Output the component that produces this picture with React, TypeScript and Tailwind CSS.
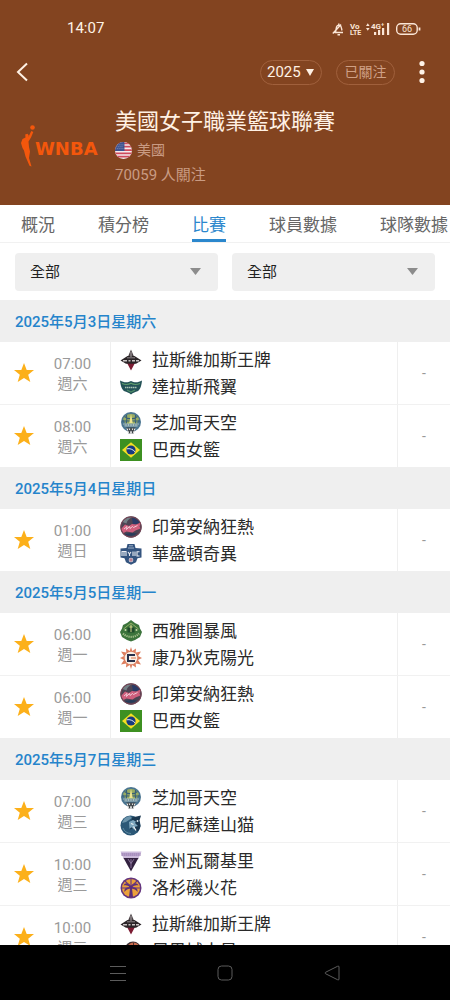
import type { ReactNode } from 'react';

function Aces() {
  return (
    <svg viewBox="0 0 22 22" className="size-[22px]" aria-hidden="true">
      <path d="M11 0.500l3.600 8.500L11 12 7.400 9z" fill="#4a4246" />
      <path d="M11 21.500L6.500 13h9z" fill="#7c1c33" />
      <path d="M0.500 11.500L7.500 7h7l7 4.500-5.500 3.200H6z" fill="#2b2528" />
      <path d="M3 11.700h4M8.500 11.700h2M12 11.700h3M16 11.700h3" stroke="#c9c4c4" strokeWidth="1.600" />
      <path d="M7 8.800h8" stroke="#989194" strokeWidth="0.900" />
      <path d="M11 3v5" stroke="#b5afb1" strokeWidth="0.900" />
    </svg>
  );
}

function Wings() {
  return (
    <svg viewBox="0 0 22 22" className="size-[22px]" aria-hidden="true">
      <path d="M0 4.500c3 1.800 6 2 8.500 1.500L11 5l2.500 1c2.500.5 5.500.3 8.500-1.500-.5 5.500-2 9.500-4.500 10.800-2 .8-4.500 1.200-6.500 3.200-2-2-4.500-2.400-6.500-3.200C2 14 .500 10 0 4.500z" fill="#245257" />
      <path d="M2 7.500c3.500 1.500 6 1.500 9-.2 3 1.700 5.500 1.700 9 .2" fill="none" stroke="#5f9c6d" strokeWidth="1.200" />
      <path d="M5 11.500h12" stroke="#a9c4b4" strokeWidth="1.600" strokeDasharray="1.500 0.500" />
      <path d="M7 14l4 2 4-2" fill="none" stroke="#4e8d68" strokeWidth="1.200" />
    </svg>
  );
}

function Sky() {
  return (
    <svg viewBox="0 0 22 22" className="size-[22px]" aria-hidden="true">
      <circle cx="11" cy="10" r="10" fill="#4a7590" />
      <path d="M3 7a9 9 0 0 1 16 0l-2.500 5h-11z" fill="#98ab62" />
      <path d="M2 9h18M4.500 4.500c4 3 9 3 13 0M6 13c1-4 1-7 .5-10M16 13c-1-4-1-7-.500-10" fill="none" stroke="#375f78" strokeWidth="1.100" />
      <path d="M11 1.500l1.700 9.500H9.300z" fill="#eee48c" />
      <path d="M3 11.500h16l-1.500 3h-13z" fill="#a8bfc0" />
      <path d="M4 13h14" stroke="#4c7086" strokeWidth="1" strokeDasharray="1.500 1" />
      <path d="M6.500 16h9L14 21.500H8z" fill="#e9ebea" />
      <path d="M6.500 16h9M7.500 18.700h7M8 16l2 5.500M11 16l-2 5.500M11 16l2 5.500M14 16l-2 5.500" stroke="#31393d" strokeWidth="0.900" />
    </svg>
  );
}

function Brazil() {
  return (
    <svg viewBox="0 0 22 22" className="size-[22px]" aria-hidden="true">
      <path d="M0 0h22v22H0z" fill="#3d9021" />
      <path d="M11 3.200L20 11l-9 7.800L2 11z" fill="#f4df23" />
      <circle cx="11" cy="11" r="4.600" fill="#173a80" />
      <path d="M6.800 9.800c3-.6 6 .4 8.200 3" fill="none" stroke="#dfe8ef" strokeWidth="1" />
    </svg>
  );
}

function Fever() {
  return (
    <svg viewBox="0 0 22 22" className="size-[22px]" aria-hidden="true">
      <circle cx="11" cy="11" r="10.700" fill="#4d4453" />
      <path d="M2.500 6A10 10 0 0 1 12 1.200c-3 1.500-5 3.500-5.500 6.300z" fill="#727f85" />
      <path d="M12 2c3 0 6.500 2 8 5l-7 2z" fill="#293a66" />
      <path d="M1 13l4-4.500 4 1.500 3-2 4 .5 5-2-1.500 4 1 2-5 2-3 2-6-1-3 1.500z" fill="#cf5f7d" />
      <path d="M4 13l3-2.500-.500 3 3-3 .500 2 2.500-2 1 1 4-2" fill="none" stroke="#f3d5de" strokeWidth="0.900" />
      <path d="M4 18c4 2.500 9 2.500 13-.500l-6-.500z" fill="#273b5a" />
      <circle cx="11" cy="11" r="10.200" fill="none" stroke="#7e4353" strokeWidth="0.900" />
    </svg>
  );
}

function Mystics() {
  return (
    <svg viewBox="0 0 22 22" className="size-[22px]" aria-hidden="true">
      <path d="M7.500 1h7l1 4 6 .5v9l-4 .7-1.500 4-5 2.500-5-2.500-1.500-4-4-.7v-9l6-.5z" fill="#34547f" />
      <path d="M9 2.800h4M8 5h6" stroke="#9db0c7" strokeWidth="1" />
      <path d="M2 13V8.500h4V13M4 8.500V13M8 9l1.500 2L11 9M9.500 11v2M13 8.500V13M15 8.500V13M19.500 8.800H17V13h2.500" fill="none" stroke="#eceef4" strokeWidth="1.100" />
      <circle cx="11" cy="17" r="2.300" fill="#d6dbe4" />
      <path d="M11 15v4M9 17h4" stroke="#a94359" strokeWidth="0.700" />
    </svg>
  );
}

function Storm() {
  return (
    <svg viewBox="0 0 22 22" className="size-[22px]" aria-hidden="true">
      <path d="M11 0l4 3 4 2 1 3.500L22 12l-2 5-5 3-4 1.500L7 20l-5-3-2-5 2-3.500L3 5l4-2z" fill="#3c743c" />
      <path d="M3.500 9L11 3l7.500 6" fill="none" stroke="#8fae62" strokeWidth="1" />
      <path d="M7.500 7.500h7v5h-7z" fill="#1f4a2b" />
      <path d="M11 4.500V12M9.500 7h3" stroke="#d5d48a" strokeWidth="1" />
      <path d="M3 13.500c4 4.500 12 4.500 16 0" fill="none" stroke="#9fbd87" strokeWidth="2" strokeDasharray="1.300 0.800" />
      <circle cx="5.500" cy="10" r="1" fill="#cfdcae" />
      <circle cx="16.500" cy="10" r="1" fill="#cfdcae" />
    </svg>
  );
}

function Sun() {
  return (
    <svg viewBox="0 0 22 22" className="size-[22px]" aria-hidden="true">
      <path d="M11 0l1.300 4L16 1.500l-.3 4L21 4.500 18 9l4 2-4 2 3 4.500-5.300-1 .3 4-3.700-2.500L11 22l-1.300-4L6 20.500l.3-4-5.300 1L4 13l-4-2 4-2-3-4.500 5.300 1L6 1.500 9.700 4z" fill="#dd7f60" />
      <circle cx="11" cy="11" r="6.300" fill="#f8eee4" />
      <path d="M15 8H8v6h7" fill="none" stroke="#28304a" strokeWidth="2" />
      <path d="M11 11h5" stroke="#d9774f" strokeWidth="1" />
    </svg>
  );
}

function Lynx() {
  return (
    <svg viewBox="0 0 22 22" className="size-[22px]" aria-hidden="true">
      <circle cx="10.500" cy="11.500" r="10" fill="#2b5877" />
      <path d="M2 9a10 10 0 0 1 8-7l2 2-6 4z" fill="#6c94ab" />
      <path d="M12 3.500l9-2-1.500 5 1 6-2.500 5-5-3-3 1 1-6z" fill="#1b3850" />
      <path d="M9 8l4-2 3 1.500-1 1.500 3 3-3 .8-.8 3-2.700-2.500-2 1.500z" fill="#7ca5bc" />
      <path d="M13.500 12.500l2.500 4M11 9.500l2.500 1" stroke="#eef3f5" strokeWidth="1.300" fill="none" />
      <path d="M3 14c1 3 4 5.500 8 5.500" fill="none" stroke="#5f8ba3" />
      <circle cx="17.500" cy="7" r="0.900" fill="#dbe7ed" />
    </svg>
  );
}

function Valkyries() {
  return (
    <svg viewBox="0 0 22 22" className="size-[22px]" aria-hidden="true">
      <path d="M0.500 1.500h21l-3 7h-15z" fill="#cbbadb" />
      <path d="M1.500 4.500h19" stroke="#9b80b3" strokeWidth="3" strokeDasharray="1.200 0.800" />
      <path d="M3.500 8h15L11 21.500z" fill="#32213f" />
      <path d="M11 9v9M8 9l3 4.500L14 9" fill="none" stroke="#9d86af" strokeWidth="0.800" />
    </svg>
  );
}

function Sparks() {
  return (
    <svg viewBox="0 0 22 22" className="size-[22px]" aria-hidden="true">
      <circle cx="11" cy="11" r="10.500" fill="#64357e" />
      <circle cx="11" cy="11" r="9" fill="#eba13a" />
      <path d="M11 8.500c-3.500-3-6-3-7.500 0 3-.8 4.500 0 6 1.500-4 .5-5.500 2-5 5 1.500-2.500 3.500-3 5.500-3.500L9 20h4l-1-8.500c2 .5 4 1 5.500 3.500.5-3-1-4.500-5-5 1.500-1.500 3-2.300 6-1.500-1.500-3-4-3-7.500 0z" fill="#5c2e79" />
      <path d="M11 1v7M5 4l5 5M17 4l-5 5M2 11h8M12 11h8" stroke="#663580" strokeWidth="1.100" />
    </svg>
  );
}

function Mercury() {
  return (
    <svg viewBox="0 0 22 22" className="size-[22px]" aria-hidden="true">
      <circle cx="13" cy="9.500" r="8" fill="#3d3034" />
      <circle cx="13.500" cy="9" r="6.500" fill="#cc6c4d" />
      <path d="M7 7.500c4-2 9-2 13 0M13.500 2.500v13" fill="none" stroke="#4c3032" strokeWidth="1" />
      <path d="M1 14l8-3 3 4-5 5z" fill="#5b3570" />
    </svg>
  );
}

type Team = { name: string; logo: ReactNode };

const aces: Team = { name: '拉斯維加斯王牌', logo: <Aces /> };
const wings: Team = { name: '達拉斯飛翼', logo: <Wings /> };
const sky: Team = { name: '芝加哥天空', logo: <Sky /> };
const brazil: Team = { name: '巴西女籃', logo: <Brazil /> };
const fever: Team = { name: '印第安納狂熱', logo: <Fever /> };
const mystics: Team = { name: '華盛頓奇異', logo: <Mystics /> };
const storm: Team = { name: '西雅圖暴風', logo: <Storm /> };
const sun: Team = { name: '康乃狄克陽光', logo: <Sun /> };
const lynx: Team = { name: '明尼蘇達山猫', logo: <Lynx /> };
const valkyries: Team = { name: '金州瓦爾基里', logo: <Valkyries /> };
const sparks: Team = { name: '洛杉磯火花', logo: <Sparks /> };
const mercury: Team = { name: '鳳凰城水星', logo: <Mercury /> };

type Match = { time: string; day: string; home: Team; away: Team };

const schedule: { date: string; matches: Match[] }[] = [
  {
    date: '2025年5月3日星期六',
    matches: [
      { time: '07:00', day: '週六', home: aces, away: wings },
      { time: '08:00', day: '週六', home: sky, away: brazil },
    ],
  },
  {
    date: '2025年5月4日星期日',
    matches: [{ time: '01:00', day: '週日', home: fever, away: mystics }],
  },
  {
    date: '2025年5月5日星期一',
    matches: [
      { time: '06:00', day: '週一', home: storm, away: sun },
      { time: '06:00', day: '週一', home: fever, away: brazil },
    ],
  },
  {
    date: '2025年5月7日星期三',
    matches: [
      { time: '07:00', day: '週三', home: sky, away: lynx },
      { time: '10:00', day: '週三', home: valkyries, away: sparks },
      { time: '10:00', day: '週三', home: aces, away: mercury },
    ],
  },
];

const tabs = ['概況', '積分榜', '比賽', '球員數據', '球隊數據'];

function StatusBar() {
  return (
    <div className="flex h-[57px] items-center justify-between pr-[28px] pl-[67px] text-[15px] text-[#fff3e6]">
      <span>14:07</span>
      <svg viewBox="0 0 90 16" className="h-4 w-[90px]" fill="none" stroke="#fbe6d6" aria-hidden="true">
        <path d="M2.500 11.500H11M3.500 11c.8-2 .3-5 1.700-6.200 1-.9 2.600-.9 3.400 0C9.500 6 9.500 8 10 9.500M6.800 2.500v1.500M5.500 13.800h2.500M0.800 12.500L9 3.500" strokeWidth="1.400" />
        <g fill="#fbe6d6" stroke="none" fontFamily="Roboto, sans-serif" fontWeight="700">
          <text x="18" y="7.500" fontSize="8">Vo</text>
          <text x="18" y="14" fontSize="7">LTE</text>
          <text x="39" y="7.500" fontSize="8">4G⁺</text>
          <path d="M34 5l1.800-2.800L37.600 5zM34 7h3.600l-1.800 2.800zM42 11h2.200v3H42zM46 9h2.200v5H46zM50 7h2.200v7H50zM55 2h2.200v12H55z" />
        </g>
        <rect x="64.700" y="2.700" width="20.500" height="10.600" rx="4" strokeWidth="1.400" />
        <path d="M87.500 6.500v3" strokeWidth="1.800" />
        <text x="70" y="11" fontSize="9" fill="#fbe6d6" stroke="none" fontFamily="Roboto, sans-serif">66</text>
      </svg>
    </div>
  );
}

function LeagueLogo() {
  return (
    <svg viewBox="0 0 82 46" className="h-[46px] w-[82px] shrink-0" role="img" aria-label="WNBA">
      <g fill="#f4570c">
        <circle cx="12.500" cy="3.500" r="2.300" />
        <path d="M11.300 7l2 1-2.300 5.500-2.500 4 .5 5.500 1 4.500-1 6.500 2.500 8.500-2-.8-4-9.200L4 26.500 2.500 24 1 19l1.500-4 3-1.500-.3-3 2.300-.7 1.300 1.700-.5 1.700z" />
        <text x="15" y="31" fontFamily="'DejaVu Sans', sans-serif" fontWeight="700" fontSize="18">WNBA</text>
      </g>
    </svg>
  );
}

function UsFlag() {
  return (
    <svg viewBox="0 0 18 18" className="size-[17px]" aria-hidden="true">
      <clipPath id="flag">
        <circle cx="9" cy="9" r="9" />
      </clipPath>
      <g clipPath="url(#flag)">
        <path d="M0 0h18v18H0z" fill="#f5ecee" />
        <path d="M0 1.500h18M0 5h18M0 8.500h18M0 12h18M0 15.500h18" stroke="#cf4a5c" strokeWidth="1.800" />
        <path d="M0 0h10v9.500H0z" fill="#3e538f" />
        <path d="M2 3h8M1 5h8M2 7h8" stroke="#b3bcd6" strokeWidth="0.700" strokeDasharray="0.800 1.200" />
      </g>
    </svg>
  );
}

function Filter({ label }: { label: string }) {
  return (
    <label className="relative flex-1">
      <select
        aria-label={label}
        className="h-[38px] w-full appearance-none rounded-[4px] bg-[#efefef] px-[15px] text-[15px] text-[#222]"
      >
        <option>全部</option>
      </select>
      <svg viewBox="0 0 11 7" className="pointer-events-none absolute top-[15px] right-[17px] h-[7px] w-[11px]" aria-hidden="true">
        <path d="M0 0h11L5.500 7z" fill="#8c8c8c" />
      </svg>
    </label>
  );
}

function TeamLine({ team }: { team: Team }) {
  return (
    <div className="flex h-[27px] items-center gap-[10px]">
      {team.logo}
      <span className="pt-[2px] text-[17px] leading-[25px] text-[#2a2a2a]">{team.name}</span>
    </div>
  );
}

function MatchRow({ match }: { match: Match }) {
  return (
    <li className="flex border-b border-[#f1f1f1] last:border-b-0">
      <div className="flex w-[110px] items-center">
        <button aria-label="收藏" className="flex w-12 justify-center">
          <svg viewBox="0 0 20 20" className="size-5" aria-hidden="true">
            <path d="M10 0l2.700 7H20l-5.800 4.700L16.300 19 10 14.900 3.700 19l2.100-7.300L0 7h7.300z" fill="#fcb01a" />
          </svg>
        </button>
        <div className="w-[49px] pt-[2px] text-center text-[15px] leading-[20px] text-[#9a9a9a]">
          <div>{match.time}</div>
          <div>{match.day}</div>
        </div>
      </div>
      <div className="flex-1 border-x border-[#efefef] py-1 pl-[9px]">
        <TeamLine team={match.home} />
        <TeamLine team={match.away} />
      </div>
      <div className="flex w-[52px] items-center justify-center text-[14px] text-[#999]">-</div>
    </li>
  );
}

export default function App() {
  return (
    <div className="flex h-screen flex-col overflow-hidden bg-white font-[Roboto,'Noto_Sans_CJK_TC',sans-serif]">
      <header className="shrink-0 bg-[#834420]">
        <StatusBar />
        <div className="flex h-[30px] items-center pr-[23px] pl-[16px]">
          <button aria-label="返回" className="mr-auto">
            <svg viewBox="0 0 12 20" className="h-5 w-3" fill="none" stroke="#fff1e4" strokeWidth="2" aria-hidden="true">
              <path d="M11 1.500L2 10l9 8.500" />
            </svg>
          </button>
          <label className="relative">
            <select
              aria-label="賽季"
              className="h-[25px] w-[62px] appearance-none rounded-full border border-[#a0603c] px-[6px] text-[15px] leading-none text-[#fff1e4]"
            >
              <option>2025</option>
            </select>
            <svg viewBox="0 0 8 7" className="pointer-events-none absolute top-[9px] right-2 h-[7px] w-2" aria-hidden="true">
              <path d="M0 0h8L4 7z" fill="#fff1e4" />
            </svg>
          </label>
          <button className="ml-[14px] h-[25px] w-[59px] rounded-full border border-[#a0603c] text-[14px] leading-none text-[#cfa085]">
            已關注
          </button>
          <button aria-label="更多" className="ml-[22px]">
            <svg viewBox="0 0 10 24" className="h-6 w-[10px]" fill="#fff3e8" aria-hidden="true">
              <circle cx="5" cy="3.500" r="2.600" />
              <circle cx="5" cy="12" r="2.600" />
              <circle cx="5" cy="20.500" r="2.600" />
            </svg>
          </button>
        </div>
        <div className="flex items-center gap-[13px] pt-5 pb-[18px] pl-5 text-[#c99b83]">
          <LeagueLogo />
          <div className="min-w-0">
            <h1 className="text-[22px] leading-[30px] font-normal text-[#fff1e4]">美國女子職業籃球聯賽</h1>
            <p className="flex h-[26px] items-center gap-[5px] text-[14px]">
              <UsFlag />
              美國
            </p>
            <p className="text-[15px] leading-[24px]">70059 人關注</p>
          </div>
        </div>
      </header>

      <nav className="flex h-[38px] shrink-0 gap-[43px] overflow-hidden border-b border-[#f1f1f1] pl-[21px]">
        {tabs.map((tab) => (
          <a
            key={tab}
            href="#"
            aria-current={tab === '比賽' ? 'page' : undefined}
            className={
              tab === '比賽'
                ? 'shrink-0 border-b-[3px] border-[#2b87cd] text-[17px] leading-[41px] text-[#2b87cd]'
                : 'shrink-0 text-[17px] leading-[41px] text-[#666]'
            }
          >
            {tab}
          </a>
        ))}
      </nav>

      <div className="flex shrink-0 gap-[14px] px-[15px] pt-[10px] pb-[9px]">
        <Filter label="球隊" />
        <Filter label="階段" />
      </div>

      <main className="min-h-0 flex-1 overflow-hidden">
        {schedule.map((group) => (
          <section key={group.date}>
            <h2 className="bg-[#efefef] px-[15px] pt-[2px] text-[15px] leading-[40px] font-medium text-[#2584cb]">{group.date}</h2>
            <ul>
              {group.matches.map((match) => (
                <MatchRow key={match.time + match.home.name} match={match} />
              ))}
            </ul>
          </section>
        ))}
      </main>

      <footer className="flex h-[55px] shrink-0 items-center justify-around bg-black px-16">
        <button aria-label="最近">
          <svg viewBox="0 0 16 16" className="size-4" fill="none" stroke="#5c5c5c" aria-hidden="true">
            <path d="M0 1.500h16M0 8.500h16M0 15.500h16" />
          </svg>
        </button>
        <button aria-label="主畫面">
          <svg viewBox="0 0 16 16" className="size-4" fill="none" stroke="#5c5c5c" aria-hidden="true">
            <rect x="1" y="1" width="14" height="14" rx="3.500" />
          </svg>
        </button>
        <button aria-label="上一頁">
          <svg viewBox="0 0 16 16" className="size-4" fill="none" stroke="#5c5c5c" strokeLinejoin="round" aria-hidden="true">
            <path d="M15 2v12q0 1.500-1.500.7L1.500 8.700q-1-.7 0-1.400l12-6Q15 .5 15 2z" />
          </svg>
        </button>
      </footer>
    </div>
  );
}
